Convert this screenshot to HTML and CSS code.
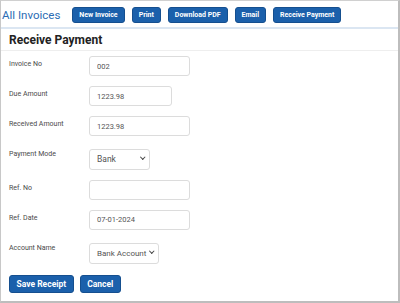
FILE: index.html
```html
<!DOCTYPE html>
<html lang="en">
<head>
  <meta charset="UTF-8" />
  <title>Receive Payment</title>
  <link rel="stylesheet" href="styles.css">
</head>
<body>
  <div class="frame">
    <div class="topbar">
      <span class="page-title">All Invoices</span>
      <button class="btn">New Invoice</button>
      <button class="btn">Print</button>
      <button class="btn">Download PDF</button>
      <button class="btn">Email</button>
      <button class="btn">Receive Payment</button>
    </div>

    <h2 class="section-title">Receive Payment</h2>

    <form class="pay-form">
      <label class="lbl">Invoice No</label>
      <input class="field wide" type="text" value="002">

      <label class="lbl">Due Amount</label>
      <input class="field short" type="text" value="1223.98">

      <label class="lbl">Received Amount</label>
      <input class="field wide" type="text" value="1223.98">

      <label class="lbl">Payment Mode</label>
      <span class="pick mode"><select class="field"><option>Bank</option></select></span>

      <label class="lbl">Ref. No</label>
      <input class="field wide" type="text" value="">

      <label class="lbl">Ref. Date</label>
      <input class="field wide" type="text" value="07-01-2024">

      <label class="lbl">Account Name</label>
      <span class="pick account"><select class="field"><option>Bank Account</option></select></span>
    </form>

    <div class="actions">
      <button class="btn big">Save Receipt</button>
      <button class="btn big">Cancel</button>
    </div>
  </div>
</body>
</html>
```

FILE: styles.css
```css
html, body { margin: 0; padding: 0; background: #fff; }
body { font-family: Roboto, "Liberation Sans", Arial, sans-serif; }

.frame {
  width: 400px; height: 303px; box-sizing: border-box;
  border-top: 1px solid #d0d0d0; border-left: 1px solid #c8c8c8;
  border-right: 2px solid #bdbdbd; border-bottom: 2px solid #bdbdbd;
  overflow: hidden;
}

/* top bar */
.topbar {
  display: flex; align-items: center; gap: 7px;
  height: 16px; padding: 6px 0 4px 1px;
  border-bottom: 2px solid #dbe6f2;
}
.page-title { font-size: 11.5px; line-height: 16px; color: #2c6cb4; margin-right: 5px; }

.btn {
  background: #1b60ab; color: #fff; border: 1px solid #154f8f;
  border-radius: 3px; font-family: inherit; font-weight: bold;
  font-size: 7px; line-height: 14px; height: 16px; padding: 0 6px; cursor: pointer;
}

.section-title {
  margin: 0; padding: 4px 8px 2px; font-size: 12px; line-height: 15px; font-weight: bold;
  color: #222; border-bottom: 1px solid #eee;
}

/* form */
.pay-form {
  display: grid; grid-template-columns: 80px auto; justify-items: start;
  row-gap: 10px; padding: 5px 8px 0;
}
.lbl { font-size: 7px; line-height: 10px; color: #4a4a4a; padding-top: 3px; }
.field {
  box-sizing: border-box; height: 20px; border: 1px solid #dcdcdc; border-radius: 3px;
  font-family: inherit; font-size: 7.5px; color: #555; padding: 0 7px; background: #fff;
}
.wide { width: 101px; }
.short { width: 83px; }

/* selects with a small chevron */
.pick { position: relative; display: block; margin-top: 1px; }
.pick select {
  -webkit-appearance: none; appearance: none; width: 100%; height: 21px;
  font-size: 8.5px; padding: 0 0 0 7px;
}
.pick::after {
  content: ""; position: absolute; right: 6px; top: 8px;
  width: 2.5px; height: 2.5px; border-right: 1px solid #444; border-bottom: 1px solid #444;
  transform: rotate(45deg); pointer-events: none;
}
.mode { width: 61px; }
.account { width: 70px; }
.account select { font-size: 8px; }

.actions { display: flex; gap: 6px; padding: 11px 8px 0; }
.big { height: 18px; font-size: 8.5px; line-height: 16px; padding: 0 6.5px; }
```
